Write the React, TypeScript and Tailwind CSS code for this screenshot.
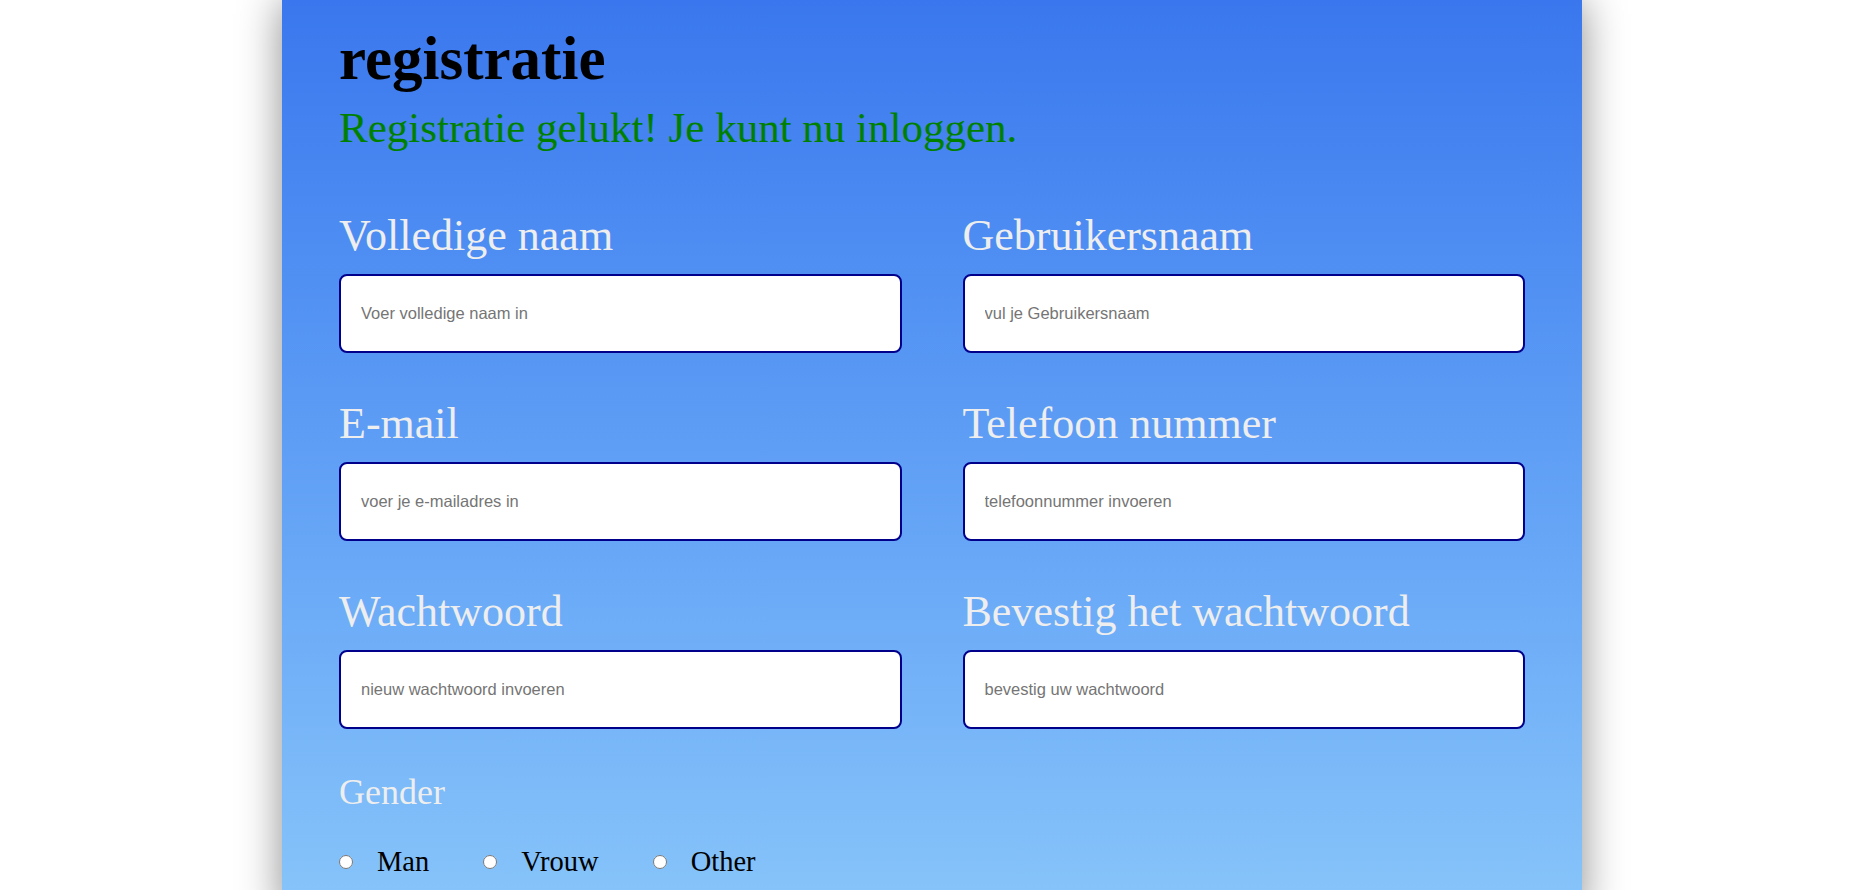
const fields = [
  { label: "Volledige naam", placeholder: "Voer volledige naam in", type: "text" },
  { label: "Gebruikersnaam", placeholder: "vul je Gebruikersnaam", type: "text" },
  { label: "E-mail", placeholder: "voer je e-mailadres in", type: "email" },
  { label: "Telefoon nummer", placeholder: "telefoonnummer invoeren", type: "tel" },
  { label: "Wachtwoord", placeholder: "nieuw wachtwoord invoeren", type: "password" },
  { label: "Bevestig het wachtwoord", placeholder: "bevestig uw wachtwoord", type: "password" },
];

const genders = ["Man", "Vrouw", "Other"];

const App = () => {
  return (
    <div className="min-h-[890px] bg-white overflow-hidden">
      <div
        className="ml-[282px] w-[1300px] min-h-[890px] bg-gradient-to-b from-[#3a77ee] to-[#88c5fa] shadow-[0_0_40px_rgba(0,0,0,0.45)] px-[57px] pt-[28px] pb-10"
        style={{ fontFamily: '"Liberation Serif", "DejaVu Serif", serif' }}
      >
        {/* Header */}
        <h1 className="text-[61px] leading-none font-bold text-black">registratie</h1>
        <p className="mt-[17px] text-[43px] leading-none text-[#008000]">
          Registratie gelukt! Je kunt nu inloggen.
        </p>

        {/* Form fields */}
        <form className="mt-[65px]">
          <div className="grid grid-cols-2 gap-x-[61px] gap-y-[49px]">
            {fields.map((f) => (
              <div key={f.label} className="flex flex-col">
                <label className="text-[44px] leading-none text-[#eeeeee]">{f.label}</label>
                <input
                  type={f.type}
                  placeholder={f.placeholder}
                  className="mt-[16px] h-[79px] w-full rounded-lg border-2 border-[#00008b] bg-white px-5 text-[16.5px] text-black outline-none placeholder:text-[#757575]"
                  style={{ fontFamily: '"Liberation Sans", Arial, sans-serif' }}
                />
              </div>
            ))}
          </div>

          {/* Gender */}
          <div className="mt-[45px] text-[36px] leading-none text-[#eeeeee]">Gender</div>
          <div className="mt-[38px] flex items-center">
            {genders.map((g) => (
              <label key={g} className="mr-[54px] flex items-center text-[28.5px] leading-none text-black">
                <input type="radio" name="gender" className="m-0 h-[14px] w-[14px]" />
                <span className="ml-[24px]">{g}</span>
              </label>
            ))}
          </div>
        </form>
      </div>
    </div>
  );
};

export default App;
